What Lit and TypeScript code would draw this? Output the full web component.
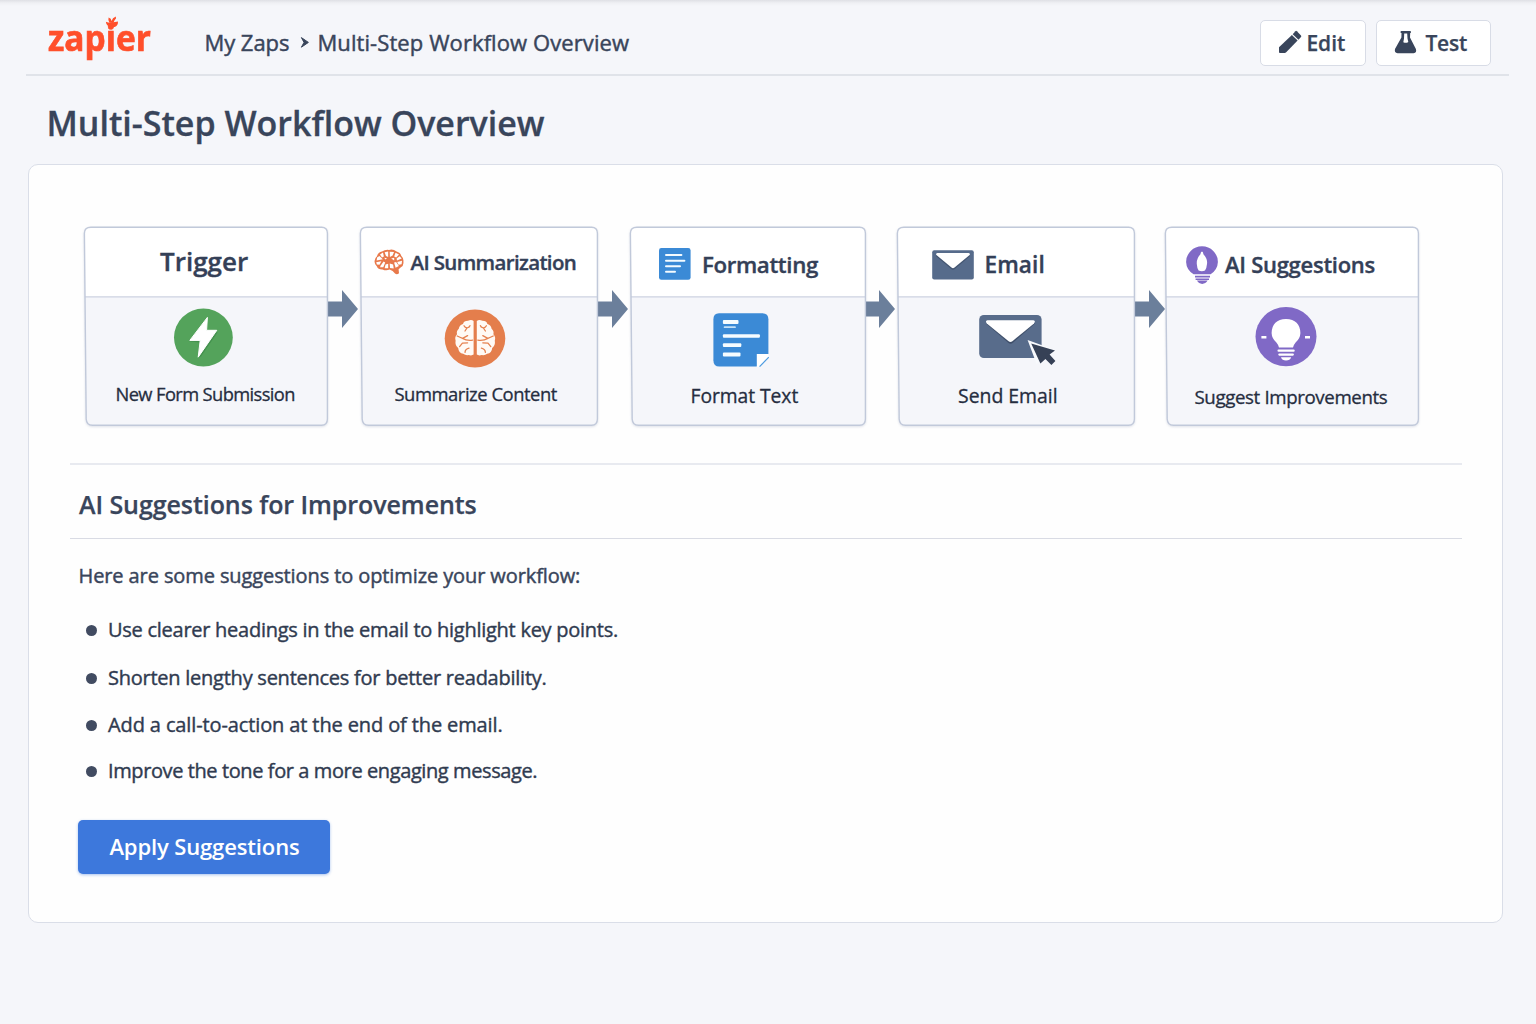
import { LitElement, html, svg, css, nothing, TemplateResult } from "lit";
import { customElement, property } from "lit/decorators.js";

const FONT = css`"Open Sans", "Noto Sans", sans-serif`;

/* ---------- icons ---------- */

const pencil = html`<svg width="24" height="24" viewBox="0 0 24 24" fill="#39455b">
  <path d="M1 17.2 13.9 5 19.6 10.6 8.2 22.2 7 23 H1.9 Q1 23 1 22Z" />
  <path d="M14.7 4.2 17.4 1.2Q18.1 .5 18.9 1.2L23 5.6Q23.6 6.4 23 7.1L20.5 9.8Z" />
</svg>`;

const flask = html`<svg width="23" height="24" viewBox="0 0 23 24">
  <path fill="#39455b" d="M7 .9H16.2Q16.9 .9 16.9 1.6V2.4Q16.9 3 16.2 3L16 7.4 21.9 19Q23 22.9 19.6 23.2H3.6Q.1 22.9 1 19L7.4 7.4 7.5 3Q6.6 3 6.6 2.4V1.6Q6.6 .9 7.3 .9Z" />
  <path fill="#fff" d="M10.2 3.4H13.2L13.5 8.5 14.3 12Q12 13.6 9.3 12.2L10 8.5Z" />
</svg>`;

const sprout = html`<svg class="sprout" width="14" height="12" viewBox="0 0 14 12" fill="#ff4f2b">
  <path d="M.9 5.8Q4.2 7 7 6.5T13 5.4Q13.2 9.6 9.6 10.9H4.6Q1.2 9.4 .9 5.8Z" />
  <path d="M4.4 6.8Q2.8 3.6 3.6 1.4Q6.4 2.2 6.5 5Q7.4 1.6 10.8 .5Q11.8 2.6 9.6 4.2L8.4 6.9Z" />
</svg>`;

const brainSmall = html`<svg width="30" height="26" viewBox="0 0 30 26">
  <path fill="#e8794b" d="M.6 13Q.2 9.4 3 7.2Q4 3.4 8 2.6Q11 .4 15 .9Q19-.2 22.6 2.4Q26.4 3.4 27.2 6.8Q30 9.4 29.4 13Q30 16.8 26.6 18.6L24.6 20.2 25 24.2Q23 26 21 24.6Q19 21.6 15.6 20.6Q12 22.2 8.6 20.4Q4 20.6 2.8 17.2Q.6 15.6 .6 13Z" />
  <g fill="#fff">
    <path d="M6 5.6 9 3.6 9.9 7.6 8 8.4Z" /><path d="M10.6 3.2 14.2 2.6V7.9L12 6.9Z" />
    <path d="M15.7 2.7 20 3 18.6 6.6 15.9 8Z" /><path d="M21.5 3.7 25 5.5 22.2 8.4 20.2 7.4Z" />
    <path d="M3.1 8.4 5.4 6.9 8.8 10.3 2.6 11.6Z" /><path d="M25.6 7.2 27.7 9.6 23 11.6 22.6 9.6Z" />
    <path d="M2.2 13.2 7.4 12.2 5.5 15.8 2.9 15.4Z" /><path d="M28 11.8 27.6 15.2 24.6 15.7 23.2 12.9Z" />
    <path d="M6.7 16.4 9.6 12.6 11.2 13.6 9.3 18.2 6 18.2Z" /><path d="M11.6 15.4 14.2 14.7V19.3L10.6 19.3Z" />
    <path d="M15.7 14.5 19.1 15.4 19.7 19.5 16 19Z" /><path d="M20.1 13.4 22.1 13 24.9 17.1 21.6 18.8Z" />
    <path d="M10.2 8.7 13 9.2 11.4 10.6Z" /><path d="M17.2 9.6 20.2 8.8 20.2 11.6Z" />
  </g>
</svg>`;

const docSmall = html`<svg width="32" height="32" viewBox="0 0 32 32">
  <rect width="31.6" height="31.8" rx="2.4" fill="#3b8ad6" />
  <g stroke="#f4fbff" stroke-width="2" stroke-linecap="round">
    <path d="M7 7H22.4M7 12.7H25.4M7 18.3H21M7 23.8H16" />
  </g>
</svg>`;

const mailSmall = html`<svg width="42" height="30" viewBox="0 0 42 30">
  <rect x=".2" y=".2" width="41.6" height="29.2" rx="2" fill="#566b8b" />
  <path d="M4.2 5.4 19.6 18.4Q21 19.5 22.4 18.4L37.8 5.4" fill="none" stroke="#445672" stroke-width="1.4" />
  <path fill="#fff" d="M5.4 2.9H36.6Q38.6 3.4 37.6 5L22.2 17.7Q21 18.6 19.8 17.7L4.4 5Q3.4 3.4 5.4 2.9Z" />
</svg>`;

const bulbSmall = html`<svg width="32" height="38" viewBox="0 0 32 38">
  <path fill="#8069c6" d="M16 .3A15.9 15.6 0 0 1 31.9 16Q31.6 23.8 24.6 28.2H7.6Q.4 24 .1 16A15.9 15.6 0 0 1 16 .3Z" />
  <path d="M9 30.6H24M9.6 33.2H23" stroke="#8069c6" stroke-width="1.6" />
  <path fill="#8069c6" d="M11 34.6H21.6Q19.6 37.9 16.2 37.9T11 34.6Z" />
  <path fill="#fff" d="M16 5.4Q17.2 5.6 17.4 8.2Q21.8 12.6 21 18Q20.6 22.4 19 24.4Q15.8 26 12.6 24.4Q11 22 10.8 18Q10.4 12.4 14.4 8.2Q14.8 5.6 16 5.4Z" />
</svg>`;

const boltBig = html`<svg width="60" height="74" viewBox="0 0 60 74">
  <ellipse cx="30.4" cy="40.5" rx="29.4" ry="29" fill="#54a35b" />
  <path fill="#3b8746" opacity=".6" d="M34.6 21.4 16.4 44.6 27 45.6 25 61 28 59.6 44.6 35.4 34 33Z" />
  <path fill="#fff" stroke="#fff" stroke-linejoin="round" stroke-width="1" d="M34.4 20.4 16.8 43.4H27.2L25.2 60.2 43.8 33.3H33.6Z" />
</svg>`;

const brainHalf = svg`
  <path fill="#fffaf5" d="M29 12.3Q26.6 10.8 23.4 12.2Q19.2 12.2 18.4 15.4Q14.6 16.6 14.2 20.2Q11.6 22.4 12.4 25.6Q9.8 28.4 11 31.8Q10.2 36.6 13.6 39.4Q14 44.6 18.6 45.2Q21 47 24 46.4Q27 47.4 29 46Z" />
  <g fill="none" stroke="#e58250" stroke-width="1.3" stroke-linecap="round" stroke-linejoin="round">
    <path d="M19.4 17.2Q20.4 19 22.4 19.4Q25.2 18.6 25.4 17M22.4 19.4 20.4 22.4" />
    <path d="M12.6 27.4Q15.4 28.8 18 29.8L23 27M18 29.8Q22 32.4 28 31.6" />
    <path d="M15 38 17.8 34.6 23 34.2M20.4 43.8Q20.6 40.4 24.4 39.6" />
  </g>`;

const brainBig = html`<svg width="62" height="74" viewBox="0 0 62 74">
  <ellipse cx="31" cy="41.5" rx="30.3" ry="29" fill="#e47e4c" />
  <g transform="translate(.6 11.6)">${brainHalf}</g>
  <g transform="translate(61.8 11.6) scale(-1 1)">${brainHalf}</g>
</svg>`;

const docBig = html`<svg width="56" height="74" viewBox="0 0 56 74">
  <path fill="#3b8ad6" d="M6 16.2H49.4Q55.4 16.2 55.4 22.2V57L43.6 69.6H6.4Q.4 69.6 .4 63.6V22.2Q.4 16.2 6 16.2Z" />
  <path fill="#fff" d="M43.8 57H55.6V60L45.8 69.8H43.8Z" />
  <path d="M46.6 69.6 55.8 60.2" stroke="#4c9be0" stroke-width="1.2" />
  <path d="M11.6 30.2H22" stroke="#c4e1f8" stroke-width="1.8" stroke-linecap="round" />
  <g fill="#f6fcff">
    <rect x="9.9" y="23" width="15.6" height="4" rx="1" /><rect x="9.9" y="37.2" width="37" height="3.5" rx="1" />
    <rect x="9.9" y="46.2" width="18.4" height="3.9" rx="1" /><rect x="9.9" y="55.6" width="17.6" height="3.8" rx="1" />
  </g>
</svg>`;

const mailBig = html`<svg width="78" height="74" viewBox="0 0 78 74">
  <rect x=".2" y="18" width="62.4" height="43" rx="4.6" fill="#586c8b" />
  <path fill="#3f4f6a" d="M7 26.4 29.6 46Q31.6 47.4 33.6 46L56 26.4 54 25H9Z" />
  <path fill="#fff" d="M8.4 23.2H54.4Q57 24 55 26.4L33.4 44.2Q31.4 45.6 29.6 44.2L7.8 26.4Q5.8 24 8.4 23.2Z" />
  <path fill="#f8fafd" d="M48.6 43 72 51.6 66 57 57.6 67Z" />
  <path fill="#364156" d="M52.2 46.6 76 53.4 70.6 57.6 76.4 64 72.4 68 66.4 62 61.4 66.6Z" />
</svg>`;

const bulbBig = html`<svg width="62" height="74" viewBox="0 0 62 74">
  <ellipse cx="31" cy="39.6" rx="30.5" ry="29.6" fill="#8069c6" />
  <path fill="#fff" d="M31 22Q45 22.6 45.4 36Q45.2 41.4 40.6 45.6Q38.6 48 38 50.6H24Q23.4 48 21.4 45.6Q16.8 41.4 16.6 36Q17 22.6 31 22Z" />
  <path d="M23.6 53.7H38.6M24.4 57.6H37.8" stroke="#fff" stroke-width="2.3" stroke-linecap="round" />
  <path fill="#fff" d="M26 60.2H36.2Q35 63.4 31 63.4T26 60.2Z" />
  <path d="M6.4 40.2H11.4M50 40.2H55" stroke="#fff" stroke-width="2.4" />
</svg>`;

/* ---------- workflow data ---------- */

interface Step { id: string; w: number; title: string; label: string; head?: TemplateResult; icon: TemplateResult; }

const STEPS: Step[] = [
  { id: "s1", w: 244, title: "Trigger", label: "New Form Submission", icon: boltBig },
  { id: "s2", w: 238, title: "AI Summarization", label: "Summarize Content", head: brainSmall, icon: brainBig },
  { id: "s3", w: 236, title: "Formatting", label: "Format Text", head: docSmall, icon: docBig },
  { id: "s4", w: 238, title: "Email", label: "Send Email", head: mailSmall, icon: mailBig },
  { id: "s5", w: 254, title: "AI Suggestions", label: "Suggest Improvements", head: bulbSmall, icon: bulbBig },
];

const TIPS: [string, string][] = [
  ["t1", "Use clearer headings in the email to highlight key points."],
  ["t2", "Shorten lengthy sentences for better readability."],
  ["t3", "Add a call-to-action at the end of the email."],
  ["t4", "Improve the tone for a more engaging message."],
];

@customElement("workflow-step")
class WorkflowStep extends LitElement {
  @property({ attribute: false }) step!: Step;

  static styles = css`
    :host { display: block; flex: none; font-family: ${FONT}; }
    .node { position: relative; height: 199px; display: flex; flex-direction: column; }
    .frame { position: absolute; inset: 0; width: 100%; height: 100%; overflow: visible; filter: drop-shadow(0 1px 1px rgba(110, 125, 160, .22)); }
    .head { position: relative; height: 70px; box-sizing: border-box; display: flex; align-items: center; }
    .title { font-weight: 600; color: #344057; white-space: nowrap; line-height: 34px; -webkit-text-stroke: .35px #344057; }
    .body { position: relative; flex: 1; display: flex; flex-direction: column; align-items: flex-start; }
    .label { font-size: 19px; line-height: 26px; color: #252d3f; white-space: nowrap; -webkit-text-stroke: .3px #252d3f; }
    svg { display: block; flex: none; }

    .s1 .head { padding: 0 0 2px 76px; }
    .s1 .title { font-size: 26px; }
    .s1 .icon { margin-left: 89px; }
    .s1 .label { margin: 10px 0 0 31.5px; font-size: 18.3px; letter-spacing: -.6px; }

    .s2 .head { padding: 0 0 0 14px; gap: 6.5px; }
    .s2 .title { font-size: 20.5px; letter-spacing: -.65px; margin-bottom: 1px; }
    .s2 .icon { margin-left: 84px; }
    .s2 .label { margin: 10px 0 0 34.5px; font-size: 18.4px; letter-spacing: -.46px; }

    .s3 .head { padding: 3px 0 0 29px; gap: 11px; }
    .s3 .title { font-size: 22.3px; letter-spacing: -.38px; margin-top: 2px; }
    .s3 .icon { margin-left: 83px; }
    .s3 .label { margin: 12px 0 0 60.5px; font-size: 19.3px; letter-spacing: -.05px; }

    .s4 .head { padding: 5px 0 0 35px; gap: 10.5px; }
    .s4 .title { font-size: 22.6px; letter-spacing: .1px; margin-top: 1px; }
    .s4 .icon { margin-left: 82px; }
    .s4 .label { margin: 12px 0 0 61px; font-size: 19.4px; letter-spacing: 0; }

    .s5 .head { padding: 6px 0 0 21px; gap: 7px; }
    .s5 .title { font-size: 22px; letter-spacing: -.27px; margin-bottom: 3px; }
    .s5 .icon { margin-left: 90px; }
    .s5 .label { margin: 13px 0 0 29.5px; font-size: 18.7px; letter-spacing: -.38px; }
  `;

  render() {
    const s = this.step;
    const r = s.w - 0.6;
    const outline = `M7 .2H${r - 6}Q${r} .2 ${r} 6.2V192Q${r} 198.2 ${r - 6} 198.2H8.5Q2.5 198.2 2.2 192L.4 6.2Q.4 .2 7 .2Z`;
    return html`<div class="node ${s.id}">
      <svg class="frame" viewBox="0 0 ${s.w} 199">
        <path d=${outline} fill="#fff" />
        <path d="M1 70H${r}V192Q${r} 198.2 ${r - 6} 198.2H8.5Q2.5 198.2 2.2 192Z" fill="#f5f6fa" />
        <path d="M1 69.8H${r}" stroke="#cdd2e1" stroke-width="1.3" />
        <path d=${outline} fill="none" stroke="#c1c9da" stroke-width="1.4" />
      </svg>
      <div class="head">${s.head ?? nothing}<span class="title">${s.title}</span></div>
      <div class="body"><div class="icon">${s.icon}</div><div class="label">${s.label}</div></div>
    </div>`;
  }
}

@customElement("app-root")
class AppRoot extends LitElement {
  static styles = css`
    :host { display: block; height: 1024px; overflow: hidden; background: linear-gradient(#dfe0e5, #eff0f4 3px, #f5f6fa 6px); font-family: ${FONT}; color: #39455b; }
    svg { display: block; flex: none; }
    .top { height: 76px; box-sizing: border-box; margin: 0 27px 0 26px; padding: 11px 18.5px 0 22px; border-bottom: 2px solid #e0e3e9; display: flex; align-items: center; }
    .logo { position: relative; width: 156.5px; height: 44px; }
    .word { display: block; transform: scale(.88, .95); transform-origin: 0 0; font-size: 38px; font-weight: 700; line-height: 44px; color: #ff4f2b; -webkit-text-stroke: .7px #ff4f2b; margin-top: -4.5px; width: 120px; }
    .sprout { position: absolute; left: 56.5px; top: -5px; }
    .crumbs { display: flex; align-items: center; font-size: 22px; line-height: 30px; white-space: nowrap; margin-top: -2px; -webkit-text-stroke: .45px #39455b; }
    .crumbs .a { letter-spacing: -.05px; }
    .crumbs .b { letter-spacing: .09px; }
    .crumbs svg { margin: 2px 6.5px 0 9.5px; }
    .actions { margin: 0 0 0 auto; display: flex; gap: 10px; }
    .btn { height: 46px; box-sizing: border-box; border: 1.6px solid #d8dce6; border-radius: 5px; background: #fff; display: flex; align-items: center; font: 600 21px/30px ${FONT}; color: #39455b; padding: 0; -webkit-text-stroke: .25px #39455b; }
    .edit { width: 106px; padding-left: 17.5px; gap: 4.4px; letter-spacing: 0; }
    .test { width: 115px; padding-left: 17px; gap: 9px; letter-spacing: -.25px; }
    .edit svg, .test svg { margin-top: -1px; }
    h1 { margin: 24px 0 16px 46.5px; font-size: 34px; line-height: 47px; height: 48px; font-weight: 600; letter-spacing: -.01px; -webkit-text-stroke: .3px #39455b; }
    .card { box-sizing: border-box; margin: 0 33px 0 28px; height: 759px; border: 1.5px solid #dadee8; border-radius: 10px; background: #fefefe; padding: 62px 40px 0 41px; }
    .flow { display: flex; padding-left: 14px; height: 236px; }
    .link { flex: none; margin-top: 62px; overflow: visible; }
    .sug { border-top: 2px solid #e8eaf0; }
    h2 { margin: 0; height: 73px; line-height: 78px; padding-left: 9px; font-size: 25px; font-weight: 600; letter-spacing: -.07px; border-bottom: 1px solid #d9dbe4; -webkit-text-stroke: .25px #39455b; }
    p { margin: 22px 0 0 8.5px; font-size: 20px; line-height: 30px; letter-spacing: -.1px; -webkit-text-stroke: .45px #39455b; }
    ul { list-style: none; margin: 24px 0 0 16px; padding: 0; }
    li { display: flex; align-items: center; gap: 11px; font-size: 20px; line-height: 30px; color: #303b50; -webkit-text-stroke: .4px #303b50; }
    .dot { width: 11px; height: 11px; border-radius: 50%; background: #414b61; }
    .t1 { letter-spacing: -.265px; margin-bottom: 18px; }
    .t2 { letter-spacing: -.245px; margin-bottom: 17px; }
    .t3 { letter-spacing: -.12px; margin-bottom: 16px; }
    .t4 { letter-spacing: -.4px; }
    .apply { display: block; margin: 34px 0 0 8px; width: 252px; height: 54px; border: 0; border-radius: 5px; background: #3d78dc; color: #fff; font: 600 22px/52px ${FONT}; letter-spacing: -.13px; padding: 0 0 2px 1px; box-shadow: 0 1px 3px rgba(61, 120, 220, .45); }
  `;

  private link(i: number) {
    const w = [32, 32, 31, 30][i];
    const tip = i === 3 ? w : w - 2;
    return html`<svg class="link" width=${w} height="40" viewBox="0 0 ${w} 40">
      <path fill="#6b7f9b" d="M-1 12.5H${tip - 16}V1L${tip} 20 ${tip - 16} 39V27.5H-1Z" />
    </svg>`;
  }

  render() {
    return html`
      <header class="top">
        <div class="logo"><span class="word">zapier</span>${sprout}</div>
        <nav class="crumbs">
          <span class="a">My Zaps</span>
          <svg width="12" height="13" viewBox="0 0 12 13"><path d="M2.4 1.6 9.4 6.4 2.4 11.2 5 6.4Z" fill="#39455b" stroke="#39455b" stroke-width="1" stroke-linejoin="round" /></svg>
          <span class="b">Multi-Step Workflow Overview</span>
        </nav>
        <div class="actions">
          <button class="btn edit">${pencil}<span>Edit</span></button>
          <button class="btn test">${flask}<span>Test</span></button>
        </div>
      </header>
      <h1>Multi-Step Workflow Overview</h1>
      <main class="card">
        <div class="flow">
          ${STEPS.map((s, i) => html`<workflow-step .step=${s} style="width:${s.w}px"></workflow-step>${i < STEPS.length - 1 ? this.link(i) : nothing}`)}
        </div>
        <section class="sug">
          <h2>AI Suggestions for Improvements</h2>
          <p>Here are some suggestions to optimize your workflow:</p>
          <ul>${TIPS.map(([c, t]) => html`<li class=${c}><span class="dot"></span><span>${t}</span></li>`)}</ul>
          <button class="apply">Apply Suggestions</button>
        </section>
      </main>`;
  }
}
